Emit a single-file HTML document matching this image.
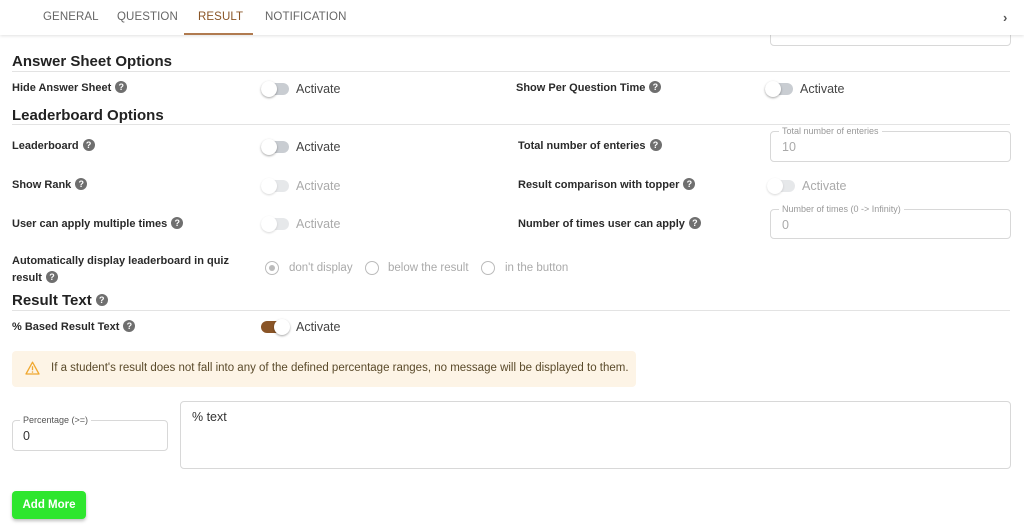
<!DOCTYPE html>
<html><head><style>
*{box-sizing:border-box;margin:0;padding:0}
body{width:1024px;height:529px;overflow:hidden;background:#fff;font-family:"Liberation Sans",sans-serif;position:relative;color:#333}
.a{position:absolute}
.tabs{left:0;top:0;width:1024px;height:35px;background:#fff;box-shadow:0 1px 3px rgba(0,0,0,.12);z-index:2}
.tab{position:absolute;top:11px;font-size:11.5px;color:#666;letter-spacing:.1px}
.h{font-size:15px;font-weight:bold;color:#222;left:12px}
.line{left:12px;width:998px;height:1px;background:#e3e3e3}
.lb{font-size:11px;font-weight:bold;color:#2a2a2a;white-space:nowrap}
.q{display:inline-block;width:12px;height:12px;border-radius:50%;background:#6f6f6f;color:#fff;font-size:9px;text-align:center;line-height:12px;vertical-align:middle;margin-left:4px;font-weight:bold;position:relative;top:-1px}
.tg{width:28px;height:12px;border-radius:6px;background:#c9cdd2}
.tg::after{content:"";position:absolute;left:0;top:-2px;width:16px;height:16px;border-radius:50%;background:#fff;box-shadow:0 1px 2px rgba(0,0,0,.35)}
.tg.d{opacity:.45}
.tg.on{background:#8a5527}
.tg.on::after{left:13px}
.act{font-size:12.5px;color:#444}
.act.d{color:#aaa}
.fld{border:1px solid #d8d8d8;border-radius:4px;background:#fff}
.fl{font-size:9px;color:#999;background:#fff;padding:0 3px}
.rad{width:14px;height:14px;border-radius:50%;border:1.5px solid #bbb}
.rt{font-size:11.5px;color:#aaa}
</style></head><body>
<div class="a tabs">
 <span class="tab" style="left:43px">GENERAL</span>
 <span class="tab" style="left:117px">QUESTION</span>
 <span class="tab" style="left:198px;color:#8a5527">RESULT</span>
 <span class="tab" style="left:265px">NOTIFICATION</span>
 <div class="a" style="left:184px;top:33px;width:69px;height:2px;background:#b07a4f"></div>
 <span class="a" style="left:1003px;top:10px;font-size:13px;color:#555;font-weight:bold">›</span>
</div>
<div class="a fld" style="left:770px;top:20px;width:241px;height:26px"></div>

<div class="a h" style="top:53px">Answer Sheet Options</div>
<div class="a line" style="top:71px"></div>
<div class="a lb" style="left:12px;top:82px">Hide Answer Sheet<span class="q">?</span></div>
<div class="a tg" style="left:261px;top:83px"></div><div class="a act" style="left:296px;top:82px">Activate</div>
<div class="a lb" style="left:516px;top:82px">Show Per Question Time<span class="q">?</span></div>
<div class="a tg" style="left:765px;top:83px"></div><div class="a act" style="left:800px;top:82px">Activate</div>

<div class="a h" style="top:107px">Leaderboard Options</div>
<div class="a line" style="top:124px"></div>
<div class="a lb" style="left:12px;top:140px">Leaderboard<span class="q">?</span></div>
<div class="a tg" style="left:261px;top:141px"></div><div class="a act" style="left:296px;top:140px">Activate</div>
<div class="a lb" style="left:518px;top:140px">Total number of enteries<span class="q">?</span></div>
<div class="a fld" style="left:770px;top:131px;width:241px;height:31px"></div>
<div class="a fl" style="left:779px;top:126px">Total number of enteries</div>
<div class="a" style="left:782px;top:140px;font-size:12.5px;color:#aaa">10</div>

<div class="a lb" style="left:12px;top:179px">Show Rank<span class="q">?</span></div>
<div class="a tg d" style="left:261px;top:180px"></div><div class="a act d" style="left:296px;top:179px">Activate</div>
<div class="a lb" style="left:518px;top:179px">Result comparison with topper<span class="q">?</span></div>
<div class="a tg d" style="left:767px;top:180px"></div><div class="a act d" style="left:802px;top:179px">Activate</div>

<div class="a lb" style="left:12px;top:218px">User can apply multiple times<span class="q">?</span></div>
<div class="a tg d" style="left:261px;top:218px"></div><div class="a act d" style="left:296px;top:217px">Activate</div>
<div class="a lb" style="left:518px;top:218px">Number of times user can apply<span class="q">?</span></div>
<div class="a fld" style="left:770px;top:209px;width:241px;height:30px"></div>
<div class="a fl" style="left:779px;top:204px">Number of times (0 -&gt; Infinity)</div>
<div class="a" style="left:782px;top:218px;font-size:12.5px;color:#aaa">0</div>

<div class="a lb" style="left:12px;top:253px;line-height:17px">Automatically display leaderboard in quiz<br>result<span class="q">?</span></div>
<div class="a rad" style="left:265px;top:261px"><div class="a" style="left:2.5px;top:2.5px;width:6px;height:6px;border-radius:50%;background:#bbb"></div></div>
<div class="a rt" style="left:289px;top:262px">don't display</div>
<div class="a rad" style="left:365px;top:261px"></div>
<div class="a rt" style="left:388px;top:262px">below the result</div>
<div class="a rad" style="left:481px;top:261px"></div>
<div class="a rt" style="left:505px;top:262px">in the button</div>

<div class="a h" style="top:292px">Result Text<span class="q">?</span></div>
<div class="a line" style="top:310px"></div>
<div class="a lb" style="left:12px;top:321px">% Based Result Text<span class="q">?</span></div>
<div class="a tg on" style="left:261px;top:321px"></div><div class="a act" style="left:296px;top:320px">Activate</div>

<div class="a" style="left:12px;top:351px;width:624px;height:36px;background:#fdf4e6;border-radius:4px"></div>
<svg class="a" style="left:25px;top:361px" width="15" height="14" viewBox="0 0 15 14"><path d="M7.5 1.2 L14 13 H1 Z" fill="none" stroke="#f0a830" stroke-width="1.3" stroke-linejoin="round"/><path d="M7.5 5.2v4" stroke="#f0a830" stroke-width="1.3"/><circle cx="7.5" cy="11" r=".8" fill="#f0a830"/></svg>
<div class="a" style="left:51px;top:362px;font-size:11.5px;color:#5a4a2a">If a student's result does not fall into any of the defined percentage ranges, no message will be displayed to them.</div>

<div class="a fld" style="left:12px;top:420px;width:156px;height:31px"></div>
<div class="a fl" style="left:20px;top:415px;color:#555">Percentage (&gt;=)</div>
<div class="a" style="left:23px;top:429px;font-size:12.5px;color:#333">0</div>
<div class="a fld" style="left:180px;top:401px;width:831px;height:68px"></div>
<div class="a" style="left:192px;top:410px;font-size:12.5px;color:#333">% text</div>

<div class="a" style="left:12px;top:491px;width:74px;height:28px;background:#2ee62e;border-radius:4px;box-shadow:0 2px 3px rgba(0,0,0,.25);color:#fff;font-size:11.5px;font-weight:bold;text-align:center;line-height:28px">Add More</div>
</body></html>
